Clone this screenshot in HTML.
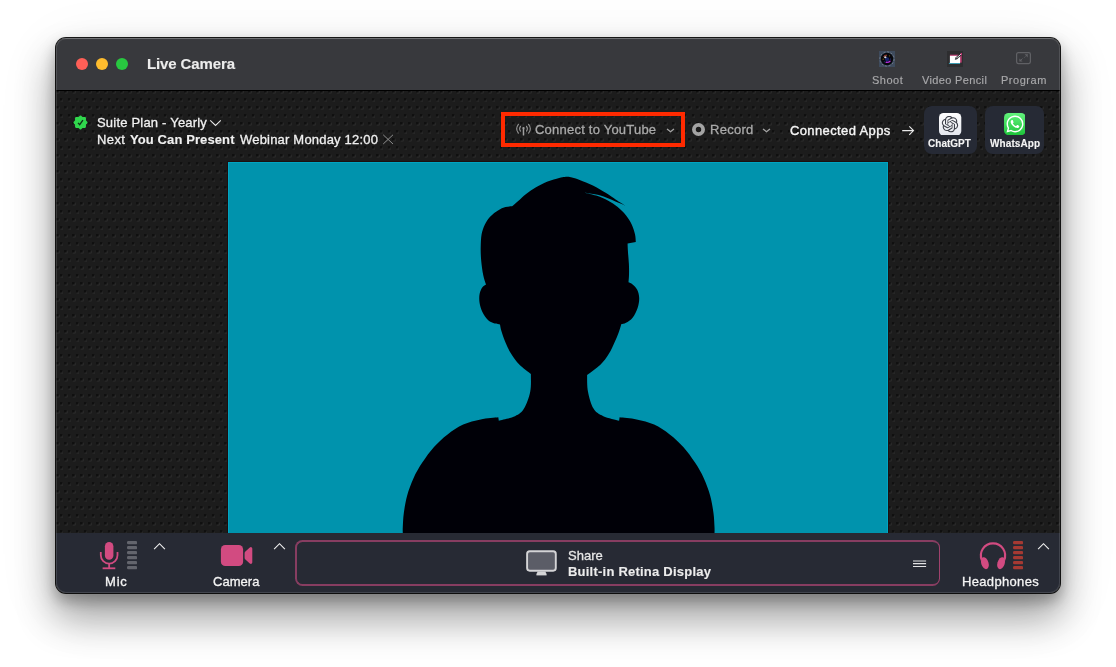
<!DOCTYPE html>
<html lang="en">
<head>
<meta charset="utf-8">
<title>Live Camera</title>
<style>
*{box-sizing:border-box;margin:0;padding:0}
html,body{width:1116px;height:667px;overflow:hidden;background:#fff}
body{font-family:"Liberation Sans",sans-serif;position:relative;color:#fff;-webkit-font-smoothing:antialiased}
.abs{position:absolute}
.t{will-change:transform;position:absolute;white-space:nowrap;line-height:1;transform-origin:0 0}
#shadow{position:absolute;left:56px;top:38px;width:1004px;height:555px;border-radius:10px;
 box-shadow:0 0 0 1px rgba(0,0,0,.9),0 24px 38px 2px rgba(0,0,0,.33),0 7px 14px 1px rgba(0,0,0,.26),0 14px 64px rgba(0,0,0,.09)}
#win{position:absolute;left:56px;top:38px;width:1004px;height:555px;border-radius:10px;overflow:hidden;background:#1c1c1c}
#titlebar{position:absolute;left:0;top:0;width:1004px;height:53px;background:#38393d;border-top:1px solid #5b5c60;border-bottom:1px solid #000}
#content{position:absolute;left:0;top:52px;width:1004px;height:443px;background-color:#1c1c1c}
#bottombar{position:absolute;left:0;top:495px;width:1004px;height:60px;background:#272a34}
.tl{position:absolute;top:20px;width:12px;height:12px;border-radius:50%}
#video{position:absolute;left:172px;top:124px;width:660px;height:371px;background:#0093ad;overflow:hidden;box-shadow:0 0 0 1px #1b1010}
#video:after{content:'';position:absolute;left:0;top:0;right:0;bottom:0;border:1px solid rgba(0,190,222,.4);border-bottom:none}
#rim{position:absolute;left:0;top:0;width:1004px;height:555px;border-radius:10px;box-shadow:inset 0 0 0 1px rgba(255,255,255,.13);pointer-events:none}
</style>
</head>
<body>
<div id="shadow"></div>
<div id="win">
  <div id="content"><svg width="1004" height="443" style="position:absolute;left:0;top:0;display:block">
    <defs><pattern id="dots" x="-1" y="-1" width="8" height="16" patternUnits="userSpaceOnUse">
      <rect x="1.05" y="1.03" width="2.8" height="2.7" fill="#0f0f0f"/><path d="M1.75 4.08H4.20V1.73" stroke="#2d2d2d" stroke-width="0.9" fill="none"/>
      <rect x="4.85" y="9.03" width="2.8" height="2.7" fill="#0f0f0f"/><path d="M5.55 12.08H8.00V9.73" stroke="#2d2d2d" stroke-width="0.9" fill="none"/>
    </pattern></defs>
    <rect width="1004" height="443" fill="url(#dots)"/></svg></div>
  <div id="titlebar"></div>
  <div class="tl" style="left:20px;background:#fe5f57"></div>
  <div class="tl" style="left:40px;background:#febc2e"></div>
  <div class="tl" style="left:60px;background:#28c840"></div>
  <div id="video"><svg width="660" height="371" viewBox="228 162 660 371" style="display:block">
    <path fill="#000007" d="M625.1 205.4C623.6 204.8 619.2 203.0 616.0 201.7C612.8 200.4 609.4 198.6 606.1 197.4C602.8 196.2 599.8 195.3 596.2 194.5C592.6 193.7 586.6 193.0 584.7 192.7C586.6 193.3 592.4 194.3 596.2 195.6C600.1 196.9 604.2 198.7 607.8 200.6C611.4 202.5 614.7 204.6 617.7 207.1C620.7 209.6 623.6 212.4 625.9 215.3C628.2 218.2 630.2 221.2 631.7 224.4C633.2 227.6 634.3 231.4 635.0 234.3C635.7 237.2 635.7 240.6 635.8 241.9L627.6 243.4C627.6 244.6 627.7 247.4 627.9 250.8C628.1 254.2 628.7 260.0 628.9 264.0C629.1 268.0 629.1 271.9 629.0 275.0C628.9 278.1 628.6 281.1 628.5 282.3C629.2 282.7 631.1 283.2 632.6 284.5C634.1 285.8 636.1 287.6 637.2 289.8C638.3 292.1 639.1 295.0 639.2 298.0C639.3 301.0 638.7 304.6 637.6 307.9C636.5 311.2 634.5 315.3 632.6 317.8C630.7 320.3 627.9 321.8 626.0 322.8C624.1 323.9 622.2 323.9 621.4 324.1C620.9 325.5 619.8 329.6 618.6 332.7C617.5 335.8 616.1 339.0 614.5 342.6C612.9 346.2 611.1 350.4 608.7 354.1C606.4 357.8 604.0 361.3 600.4 364.8C596.8 368.3 589.3 373.3 587.1 375.0C587.2 377.8 586.9 386.2 588.0 391.8C589.1 397.4 591.0 404.5 593.5 408.6C596.0 412.7 599.0 414.2 603.3 416.2C607.6 418.2 616.5 419.9 619.1 420.7L619.6 417.3C622.4 417.6 630.9 418.2 636.6 419.4C642.4 420.6 648.6 422.1 654.1 424.6C659.6 427.1 664.8 430.7 669.7 434.4C674.6 438.1 679.1 442.3 683.3 447.0C687.5 451.7 691.6 457.4 695.0 462.6C698.4 467.8 701.3 472.7 703.8 478.2C706.3 483.7 708.6 489.9 710.2 495.7C711.8 501.5 712.8 508.1 713.5 513.3C714.2 518.5 714.3 523.5 714.5 526.9C714.7 530.3 714.5 532.4 714.5 533.5L402.8 533.5C402.8 532.4 402.6 530.3 402.8 526.9C403.0 523.5 403.1 518.5 403.8 513.3C404.5 508.1 405.5 501.5 407.1 495.7C408.7 489.9 411.0 483.7 413.5 478.2C416.0 472.7 418.9 467.8 422.3 462.6C425.7 457.4 429.8 451.7 434.0 447.0C438.2 442.3 442.7 438.1 447.6 434.4C452.5 430.7 457.7 427.1 463.2 424.6C468.7 422.1 474.8 420.6 480.7 419.4C486.6 418.2 495.4 417.6 498.3 417.3L498.8 420.7C501.5 419.9 510.8 418.2 515.0 416.2C519.2 414.2 521.5 412.7 524.0 408.6C526.5 404.5 529.1 397.6 530.2 391.8C531.4 386.0 530.8 377.0 530.9 374.0C529.0 372.5 522.8 368.1 519.5 364.8C516.2 361.5 513.6 357.8 511.3 354.1C509.0 350.4 507.1 346.5 505.5 342.6C503.9 338.8 502.3 334.0 501.4 331.0C500.5 328.0 500.2 325.5 500.0 324.4C499.1 324.3 496.8 324.3 494.8 323.6C492.8 322.9 490.3 322.2 488.2 320.3C486.1 318.4 483.8 314.9 482.4 312.0C481.0 309.1 480.1 306.0 479.6 303.0C479.1 300.0 479.1 296.5 479.6 293.9C480.1 291.3 481.3 288.9 482.4 287.3C483.5 285.7 485.4 285.0 486.0 284.5C485.5 282.9 484.0 278.9 483.2 274.9C482.4 270.9 481.6 265.3 481.2 260.7C480.8 256.1 480.6 251.9 480.7 247.5C480.8 243.1 480.9 238.2 481.6 234.3C482.3 230.5 483.4 227.4 484.9 224.4C486.4 221.4 488.4 218.5 490.6 216.2C492.8 213.9 495.5 211.9 498.0 210.4C500.5 208.9 503.1 207.8 505.5 207.1C507.9 206.4 511.0 206.4 512.1 206.3C513.1 205.5 515.6 203.4 517.9 201.3C520.2 199.2 523.1 196.2 526.1 193.9C529.1 191.6 532.4 189.4 536.0 187.3C539.6 185.2 543.8 183.1 547.6 181.5C551.5 179.9 556.2 178.7 559.1 177.9C562.0 177.1 562.9 177.0 564.9 176.9C566.9 176.8 568.5 176.8 571.0 177.3C573.5 177.8 576.1 178.5 579.7 179.9C583.4 181.3 588.5 183.4 592.9 185.6C597.3 187.8 602.2 190.8 606.1 193.1C610.0 195.4 612.8 197.6 616.0 199.7C619.2 201.8 623.6 204.4 625.1 205.4Z"/>
  </svg></div>
  <div id="bottombar"></div>

  <!-- title bar icons -->
  <svg class="abs" style="left:823px;top:13px" width="16" height="16" viewBox="0 0 16 16">
    <rect width="16" height="16" fill="#3e4b5d"/>
    <circle cx="8" cy="8" r="7.1" fill="none" stroke="#a9b1bd" stroke-width="0.8" stroke-dasharray="2 1.7" opacity=".6"/>
    <circle cx="8" cy="8" r="6.2" fill="#07080c"/>
    <circle cx="8.1" cy="8.3" r="2.1" fill="#17246a"/>
    <path d="M4.5 5.5Q6 3.900 8 4.200" fill="none" stroke="#c24c3c" stroke-width="0.9"/>
    <ellipse cx="6.3" cy="6.2" rx="1.2" ry="0.95" fill="#dcd8da"/>
    <circle cx="10.5" cy="4.800" r="0.65" fill="#80540f"/>
    <circle cx="4.2" cy="8.200" r="0.65" fill="#93621b"/>
    <circle cx="11.5" cy="8" r="0.6" fill="#25348a"/>
    <path d="M7.200 11.300Q9.300 11.800 11 10.200" fill="none" stroke="#b22bdc" stroke-width="1.4" stroke-linecap="round"/>
    <circle cx="5.300" cy="10.800" r="0.6" fill="#173f73"/>
  </svg>
  <svg class="abs" style="left:891px;top:13px" width="16" height="16" viewBox="0 0 16 16">
    <rect width="16" height="16" fill="#2d2d2f"/>
    <rect x="2.900" y="3.700" width="10.300" height="1.200" fill="#c43a74"/>
    <rect x="13" y="3.200" width="1.700" height="8.400" fill="#b8386c"/>
    <rect x="1.900" y="11.900" width="11.200" height="1" fill="#3ba7bf"/>
    <rect x="2.900" y="4.800" width="10.200" height="7.200" fill="#ffffff"/>
    <path d="M9 7.600 L14 3.100" stroke="#15181c" stroke-width="2.200"/>
    <path d="M9.500 7.150 L14 3.100" stroke="#fff" stroke-width="1.050" stroke-dasharray="1.200 0.450"/>
    <circle cx="14.300" cy="2.900" r="0.8" fill="#e0337f"/>
    <path d="M8.300 6.900L7.800 8.800L9.700 8.300Z" fill="#0c1a20"/>
  </svg>
  <svg class="abs" style="left:959px;top:13px" width="18" height="14" viewBox="0 0 18 14">
    <rect x="1.6" y="1.5" width="13.8" height="11" rx="1.700" fill="none" stroke="#606165" stroke-width="1.250"/>
    <path d="M9.3 6.6L12.3 3.6" stroke="#606165" stroke-width="0.9" fill="none" stroke-dasharray="1.2 0.5"/>
    <path d="M9.6 3.3H12.7V6.4Z" fill="#606165"/>
    <path d="M7.5 7.5L4.9 10.1" stroke="#606165" stroke-width="0.9" fill="none"/>
    <path d="M4.4 7.4V10.6H7.6Z" fill="#606165"/>
  </svg>

  <!-- plan row -->
  <svg class="abs" style="left:16px;top:76px" width="17" height="17" viewBox="-8.5 -8.5 17 17">
    <rect x="-5.45" y="-5.45" width="10.9" height="10.9" rx="1.1" fill="#30d64d"/>
    <rect x="-5.3" y="-5.3" width="10.6" height="10.6" rx="1.1" fill="#30d64d" transform="rotate(45)"/>
    <path d="M-2.5 0.4L-0.8 2.2L2.4 -2.3" fill="none" stroke="#0f3318" stroke-width="1.35"/>
  </svg>
  <svg class="abs" style="left:153px;top:81px" width="13" height="8" viewBox="0 0 13 8"><path d="M1.2 1.3L6.5 6.5L11.8 1.3" fill="none" stroke="#e6e6e6" stroke-width="1.1"/></svg>
  <svg class="abs" style="left:326px;top:96px" width="12" height="11" viewBox="0 0 12 11"><path d="M1.2 0.8L11 10M11 0.8L1.2 10" fill="none" stroke="#8c8c8c" stroke-width="1"/></svg>

  <!-- connect / record -->
  <div class="abs" style="left:445px;top:74px;width:184px;height:35px;border:4px solid #ff2a00"></div>
  <svg class="abs" style="left:458.6px;top:84px" width="17" height="15" viewBox="-8.5 -6.7 17 15">
    <g fill="none" stroke="#939393" stroke-width="1.15" stroke-linecap="round">
      <path d="M-5.1 -4.4A7.1 7.1 0 0 0 -5.1 4.4"/><path d="M5.1 -4.4A7.1 7.1 0 0 1 5.1 4.4"/>
      <path d="M-3 -2.4A4 4 0 0 0 -3 2.4"/><path d="M3 -2.4A4 4 0 0 1 3 2.4"/>
    </g>
    <circle cx="0" cy="-0.6" r="1.15" fill="#a0a0a0"/><rect x="-0.75" y="-0.6" width="1.5" height="7.4" rx=".5" fill="#a0a0a0"/>
  </svg>
  <svg class="abs" style="left:610px;top:89px" width="10" height="7" viewBox="0 0 10 7"><path d="M1.400 2.300L4.500 4.700L7.600 2.300" fill="none" stroke="#a2a2a2" stroke-width="1.350" stroke-linecap="round" stroke-linejoin="round"/></svg>
  <svg class="abs" style="left:635px;top:84px" width="15" height="15" viewBox="-7.5 -7.5 15 15"><circle r="4.6" fill="none" stroke="#a3a3a3" stroke-width="3.8"/></svg>
  <svg class="abs" style="left:706px;top:89px" width="10" height="7" viewBox="0 0 10 7"><path d="M1.400 2.300L4.500 4.700L7.600 2.300" fill="none" stroke="#a2a2a2" stroke-width="1.350" stroke-linecap="round" stroke-linejoin="round"/></svg>
  <svg class="abs" style="left:845px;top:87px" width="14" height="11" viewBox="0 0 14 11"><path d="M1.2 5.6H12.4M8.3 1.4L12.5 5.6L8.3 9.8" fill="none" stroke="#e8e8e8" stroke-width="1.1"/></svg>

  <!-- connected app cards -->
  <div class="abs" style="left:868px;top:68px;width:53px;height:48px;border-radius:8px;background:#262a35"></div>
  <div class="abs" style="left:929px;top:68px;width:59px;height:48px;border-radius:8px;background:#262a35"></div>
  <svg class="abs" style="left:883.4px;top:74.7px" width="22.3" height="22.6" viewBox="0 0 22.3 22.6">
    <defs><linearGradient id="gw" x1="0" y1="0" x2="0" y2="1"><stop offset="0" stop-color="#ffffff"/><stop offset="1" stop-color="#e3e6ee"/></linearGradient></defs>
    <rect width="22.3" height="22.6" rx="4.6" fill="url(#gw)"/>
    <path transform="translate(2.8 2.9) scale(0.683)" fill="#3c3f48" d="M22.2819 9.8211a5.9847 5.9847 0 0 0-.5157-4.9108 6.0462 6.0462 0 0 0-6.5098-2.9A6.0651 6.0651 0 0 0 4.9807 4.1818a5.9847 5.9847 0 0 0-3.9977 2.9 6.0462 6.0462 0 0 0 .7427 7.0966 5.98 5.98 0 0 0 .511 4.9107 6.051 6.051 0 0 0 6.5146 2.9001A5.9847 5.9847 0 0 0 13.2599 24a6.0557 6.0557 0 0 0 5.7718-4.2058 5.9894 5.9894 0 0 0 3.9977-2.9001 6.0557 6.0557 0 0 0-.7475-7.0729zm-9.022 12.6081a4.4755 4.4755 0 0 1-2.8764-1.0408l.1419-.0804 4.7783-2.7582a.7948.7948 0 0 0 .3927-.6813v-6.7369l2.02 1.1686a.071.071 0 0 1 .038.052v5.5826a4.504 4.504 0 0 1-4.4945 4.4944zm-9.6607-4.1254a4.4708 4.4708 0 0 1-.5346-3.0137l.142.0852 4.783 2.7582a.7712.7712 0 0 0 .7806 0l5.8428-3.3685v2.3324a.0804.0804 0 0 1-.0332.0615L9.74 19.9502a4.4992 4.4992 0 0 1-6.1408-1.6464zM2.3408 7.8956a4.485 4.485 0 0 1 2.3655-1.9728V11.6a.7664.7664 0 0 0 .3879.6765l5.8144 3.3543-2.0201 1.1685a.0757.0757 0 0 1-.071 0l-4.8303-2.7865A4.504 4.504 0 0 1 2.3408 7.872zm16.5963 3.8558L13.1038 8.364 15.1192 7.2a.0757.0757 0 0 1 .071 0l4.8303 2.7913a4.4944 4.4944 0 0 1-.6765 8.1042v-5.6772a.79.79 0 0 0-.407-.667zm2.0107-3.0231l-.142-.0852-4.7735-2.7818a.7759.7759 0 0 0-.7854 0L9.409 9.2297V6.8974a.0662.0662 0 0 1 .0284-.0615l4.8303-2.7866a4.4992 4.4992 0 0 1 6.6802 4.66zM8.3065 12.863l-2.02-1.1638a.0804.0804 0 0 1-.038-.0567V6.0742a4.4992 4.4992 0 0 1 7.3757-3.4537l-.142.0805L8.704 5.459a.7948.7948 0 0 0-.3927.6813zm1.0976-2.3654l2.602-1.4998 2.6069 1.4998v2.9994l-2.5974 1.4997-2.6067-1.4997Z"/>
  </svg>
  <svg class="abs" style="left:947.6px;top:74.7px" width="21.8" height="22.2" viewBox="0 0 21.8 22.2">
    <defs><linearGradient id="gg" x1="0" y1="0" x2="0" y2="1"><stop offset="0" stop-color="#62f27c"/><stop offset="1" stop-color="#1dc43a"/></linearGradient></defs>
    <rect width="21.8" height="22.2" rx="4.6" fill="url(#gg)"/>
    <path transform="translate(2.45 2.5) scale(0.71)" fill="#ffffff" d="M17.472 14.382c-.297-.149-1.758-.867-2.03-.967-.273-.099-.471-.148-.67.15-.197.297-.767.966-.94 1.164-.173.199-.347.223-.644.075-.297-.15-1.255-.463-2.39-1.475-.883-.788-1.48-1.761-1.653-2.059-.173-.297-.018-.458.13-.606.134-.133.298-.347.446-.52.149-.174.198-.298.298-.497.099-.198.05-.371-.025-.52-.075-.149-.669-1.612-.916-2.207-.242-.579-.487-.5-.669-.51-.173-.008-.371-.01-.57-.01-.198 0-.52.074-.792.372-.272.297-1.04 1.016-1.04 2.479 0 1.462 1.065 2.875 1.213 3.074.149.198 2.096 3.2 5.077 4.487.709.306 1.262.489 1.694.625.712.227 1.36.195 1.871.118.571-.085 1.758-.719 2.006-1.413.248-.694.248-1.289.173-1.413-.074-.124-.272-.198-.57-.347m-5.421 7.403h-.004a9.87 9.87 0 01-5.031-1.378l-.361-.214-3.741.982.998-3.648-.235-.374a9.86 9.86 0 01-1.51-5.26c.001-5.45 4.436-9.884 9.888-9.884 2.64 0 5.122 1.03 6.988 2.898a9.825 9.825 0 012.893 6.994c-.003 5.45-4.437 9.884-9.885 9.884m8.413-18.297A11.815 11.815 0 0012.05 0C5.495 0 .16 5.335.157 11.892c0 2.096.547 4.142 1.588 5.945L.057 24l6.305-1.654a11.882 11.882 0 005.683 1.448h.005c6.554 0 11.890-5.335 11.893-11.893a11.821 11.821 0 00-3.48-8.413Z"/>
  </svg>

  <!-- bottom bar content -->
  <svg class="abs" style="left:42px;top:502px" width="24" height="31" viewBox="0 0 24 31">
    <rect x="6.9" y="2" width="8.5" height="17.8" rx="4.25" fill="#d24b81"/>
    <path d="M2.8 12.1V15.3A8.35 8.35 0 0 0 19.5 15.300V12.1" fill="none" stroke="#d24b81" stroke-width="1.8"/>
    <rect x="10.25" y="23.4" width="1.8" height="5.2" fill="#d24b81"/>
    <rect x="4.6" y="27.4" width="12.7" height="1.8" fill="#d24b81"/>
  </svg>
  <svg class="abs" style="left:71px;top:502.8px" width="10.2" height="29" viewBox="0 0 10.2 29">
    <g fill="#63656d"><rect y="0" width="10.2" height="3.3" rx="1.4"/><rect y="5" width="10.2" height="3.3" rx="1.4"/><rect y="10" width="10.2" height="3.3" rx="1.4"/><rect y="15" width="10.2" height="3.3" rx="1.4"/><rect y="20" width="10.2" height="3.3" rx="1.4"/><rect y="25" width="10.2" height="3.3" rx="1.4"/></g>
  </svg>
  <svg class="abs chev" style="left:97px;top:503.5px" width="13" height="9" viewBox="0 0 13 9"><path d="M1.100 7.150L6.500 1.700L11.900 7.150" fill="none" stroke="#f0f0f0" stroke-width="1.150"/></svg>
  <svg class="abs" style="left:164px;top:506px" width="34" height="23" viewBox="0 0 34 23">
    <rect x="0.9" y="1.1" width="22.2" height="20.9" rx="4.3" fill="#d24b81"/>
    <path d="M24.600 9.300Q24.600 8.200 25.400 7.500L29.800 3.600Q30.600 2.900 31.400 3.200Q32.300 3.600 32.300 4.800V18.200Q32.300 19.400 31.400 19.800Q30.600 20.100 29.800 19.400L25.400 15.500Q24.600 14.800 24.600 13.700Z" fill="#d24b81"/>
  </svg>
  <svg class="abs chev" style="left:217px;top:503.5px" width="13" height="9" viewBox="0 0 13 9"><path d="M1.100 7.150L6.500 1.700L11.900 7.150" fill="none" stroke="#f0f0f0" stroke-width="1.150"/></svg>
  <div class="abs" style="left:239px;top:502px;width:645px;height:46px;border-radius:7.500px;border:2px solid #873d61;border-right:1px solid #a0426d"></div>
  <svg class="abs" style="left:469px;top:511px" width="33" height="28" viewBox="0 0 33 28">
    <rect x="2.1" y="2.3" width="28.700" height="19.400" rx="2.6" fill="#5b5d67" stroke="#d4d4d6" stroke-width="1.9"/>
    <path d="M12.6 22.6H20.4L21.400 25.100H11.600Z" fill="#d4d4d6"/><rect x="11.400" y="24.700" width="10.200" height="1.700" fill="#d4d4d6"/>
  </svg>
  <svg class="abs" style="left:856px;top:522px" width="15" height="8" viewBox="0 0 15 8"><path d="M1 1H14.100M1 3.650H14.100M1 6.500H14.100" stroke="#e2e2e4" stroke-width="1.150" fill="none"/></svg>
  <svg class="abs" style="left:921px;top:502px" width="32" height="31" viewBox="0 0 32 31">
    <path d="M4.900 20.200A12.100 12.100 0 1 1 27.100 20.200" fill="none" stroke="#d24b81" stroke-width="2.200"/>
    <ellipse cx="7.900" cy="23.200" rx="3.650" ry="6.100" transform="rotate(-17 7.900 23.200)" fill="#d24b81"/>
    <ellipse cx="24.100" cy="23.200" rx="3.650" ry="6.100" transform="rotate(17 24.100 23.200)" fill="#d24b81"/>
  </svg>
  <svg class="abs" style="left:957px;top:502.800px" width="10.200" height="29" viewBox="0 0 10.2 29">
    <g fill="#a53932"><rect y="0" width="10.2" height="3.3" rx="1.4"/><rect y="5" width="10.2" height="3.3" rx="1.4"/><rect y="10" width="10.2" height="3.3" rx="1.4"/><rect y="15" width="10.2" height="3.3" rx="1.4"/><rect y="20" width="10.2" height="3.3" rx="1.4"/><rect y="25" width="10.2" height="3.3" rx="1.4"/></g>
  </svg>
  <svg class="abs chev" style="left:981px;top:503.500px" width="13" height="9" viewBox="0 0 13 9"><path d="M1.100 7.150L6.500 1.700L11.900 7.150" fill="none" stroke="#f0f0f0" stroke-width="1.150"/></svg>
<div class="t" id="t_title" style="left:90.66px;top:18.20px;font-size:15px;font-weight:700;color:#ececec;letter-spacing:-0.117px;-webkit-text-stroke:0.12px #ececec">Live Camera</div>
<div class="t" id="t_shoot" style="left:815.86px;top:36.59px;font-size:11px;font-weight:401;color:#a9a9ab;letter-spacing:0.490px;-webkit-text-stroke:0.15px #a9a9ab">Shoot</div>
<div class="t" id="t_vp" style="left:866.40px;top:36.59px;font-size:11px;font-weight:401;color:#a9a9ab;letter-spacing:0.352px;-webkit-text-stroke:0.15px #a9a9ab">Video Pencil</div>
<div class="t" id="t_prog" style="left:944.74px;top:36.59px;font-size:11px;font-weight:401;color:#a9a9ab;letter-spacing:0.525px;-webkit-text-stroke:0.15px #a9a9ab">Program</div>
<div class="t" id="t_plan" style="left:40.89px;top:77.90px;font-size:13px;font-weight:400;color:#f0f0f0;letter-spacing:0.202px;-webkit-text-stroke:0.3px #f0f0f0">Suite Plan - Yearly</div>
<div class="t" id="t_next" style="left:41.48px;top:94.70px;font-size:13px;font-weight:400;color:#f0f0f0;letter-spacing:0.380px;-webkit-text-stroke:0.3px #f0f0f0">Next</div>
<div class="t" id="t_ycp" style="left:74.20px;top:94.70px;font-size:13px;font-weight:700;color:#f0f0f0;letter-spacing:0.100px;-webkit-text-stroke:0.12px #f0f0f0">You Can Present</div>
<div class="t" id="t_web" style="left:183.80px;top:94.70px;font-size:13px;font-weight:400;color:#f0f0f0;letter-spacing:0.197px;-webkit-text-stroke:0.3px #f0f0f0">Webinar Monday 12:00</div>
<div class="t" id="t_yt" style="left:479.19px;top:84.90px;font-size:13px;font-weight:400;color:#a9a9a9;letter-spacing:0.221px;-webkit-text-stroke:0.3px #a9a9a9">Connect to YouTube</div>
<div class="t" id="t_rec" style="left:653.58px;top:84.70px;font-size:13px;font-weight:400;color:#a9a9a9;letter-spacing:0.288px;-webkit-text-stroke:0.3px #a9a9a9">Record</div>
<div class="t" id="t_apps" style="left:733.69px;top:86.00px;font-size:13px;font-weight:402;color:#f4f4f4;letter-spacing:0.376px;-webkit-text-stroke:0.38px #f4f4f4">Connected Apps</div>
<div class="t" id="t_gpt" style="left:871.89px;top:101.03px;font-size:10px;font-weight:700;color:#f4f4f4;letter-spacing:0.025px;-webkit-text-stroke:0.12px #f4f4f4">ChatGPT</div>
<div class="t" id="t_wa" style="left:933.70px;top:101.03px;font-size:10px;font-weight:700;color:#f4f4f4;letter-spacing:0.098px;-webkit-text-stroke:0.12px #f4f4f4">WhatsApp</div>
<div class="t" id="t_mic" style="left:48.58px;top:536.80px;font-size:13px;font-weight:400;color:#f4f4f4;letter-spacing:0.801px;-webkit-text-stroke:0.3px #f4f4f4">Mic</div>
<div class="t" id="t_cam" style="left:156.99px;top:536.70px;font-size:13px;font-weight:400;color:#f4f4f4;letter-spacing:0.038px;-webkit-text-stroke:0.3px #f4f4f4">Camera</div>
<div class="t" id="t_share" style="left:511.99px;top:510.60px;font-size:13px;font-weight:400;color:#e6e6e6;letter-spacing:0.036px;-webkit-text-stroke:0.3px #e6e6e6">Share</div>
<div class="t" id="t_disp" style="left:511.59px;top:527.10px;font-size:13px;font-weight:700;color:#ececec;letter-spacing:0.226px;-webkit-text-stroke:0.12px #ececec">Built-in Retina Display</div>
<div class="t" id="t_hp" style="left:905.68px;top:536.60px;font-size:13px;font-weight:400;color:#f4f4f4;letter-spacing:0.333px;-webkit-text-stroke:0.3px #f4f4f4">Headphones</div>
  <div id="rim"></div>
</div>
</body>
</html>
